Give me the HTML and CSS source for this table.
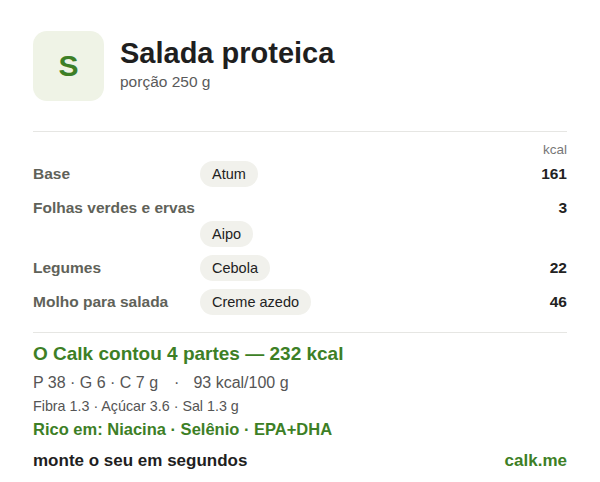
FILE: index.html
```html
<!DOCTYPE html>
<html lang="pt">
<head>
    <meta charset="UTF-8">
    <meta name="viewport" content="width=device-width, initial-scale=1.0">
    <title>Salada proteica</title>
    <link rel="stylesheet" href="styles.css">
</head>
<body>
    <div class="card">
        <!-- Header -->
        <div class="header">
            <div class="avatar">S</div>
            <div class="title-block">
                <h1>Salada proteica</h1>
                <div class="portion">porção 250 g</div>
            </div>
        </div>

        <!-- Parts -->
        <div class="parts">
            <div class="unit">kcal</div>
            <div class="row">
                <div class="label">Base</div>
                <div class="pills"><span class="pill">Atum</span></div>
                <div class="num">161</div>
            </div>
            <div class="row split">
                <div class="label">Folhas verdes e ervas</div>
                <div class="num">3</div>
                <div class="pills"><span class="pill">Aipo</span></div>
            </div>
            <div class="row">
                <div class="label">Legumes</div>
                <div class="pills"><span class="pill">Cebola</span></div>
                <div class="num">22</div>
            </div>
            <div class="row">
                <div class="label">Molho para salada</div>
                <div class="pills"><span class="pill">Creme azedo</span></div>
                <div class="num">46</div>
            </div>
        </div>

        <!-- Summary -->
        <div class="summary">
            <div class="total">O Calk contou 4 partes — 232 kcal</div>
            <div class="macros">P 38 · G 6 · C 7 g<span class="sep">·</span>93 kcal/100 g</div>
            <div class="extra">Fibra 1.3 · Açúcar 3.6 · Sal 1.3 g</div>
            <div class="rich">Rico em: Niacina · Selênio · EPA+DHA</div>
        </div>

        <div class="footer">
            <span class="cta">monte o seu em segundos</span>
            <span class="brand">calk.me</span>
        </div>
    </div>
</body>
</html>
```

FILE: styles.css
```css
body {
    font-family: 'Liberation Sans', Arial, sans-serif;
    margin: 0;
    padding: 0;
    background: #ffffff;
    color: #222;
}

.card {
    padding: 31px 33px 0 33px;
}

/* Header */
.header {
    display: flex;
    align-items: center;
    gap: 16px;
    padding-bottom: 30px;
    border-bottom: 1px solid #e6e6e3;
}

.avatar {
    width: 71px;
    height: 70px;
    border-radius: 14px;
    background: #eff3e6;
    color: #3d7f26;
    font-size: 30px;
    font-weight: bold;
    display: flex;
    align-items: center;
    justify-content: center;
}

.title-block {
    margin-top: -6px;
}

h1 {
    margin: 0;
    font-size: 29px;
    line-height: 34px;
    color: #1f1f1f;
}

.portion {
    font-size: 15.5px;
    color: #5a5a5a;
    margin-top: 3px;
}

/* Parts table */
.parts {
    display: flex;
    flex-direction: column;
    gap: 8px;
    padding-top: 10px;
    padding-bottom: 17px;
    border-bottom: 1px solid #e6e6e3;
}

.unit {
    text-align: right;
    font-size: 13.5px;
    color: #777;
    margin-bottom: -4px;
}

.row {
    display: grid;
    grid-template-columns: 167px 1fr auto;
    grid-auto-rows: 26px;
    align-items: center;
}

.row.split .label { grid-row: 1; grid-column: 1; }
.row.split .num { grid-row: 1; grid-column: 3; }
.row.split .pills { grid-row: 2; grid-column: 2; }

.label {
    font-size: 15.5px;
    font-weight: bold;
    color: #5f6259;
    white-space: nowrap;
}

.pills {
    display: flex;
    gap: 6px;
}

.pill {
    background: #f1f1ec;
    border-radius: 13px;
    height: 26px;
    line-height: 26px;
    padding: 0 12px;
    font-size: 14.5px;
    color: #222;
}

.num {
    font-size: 15.5px;
    font-weight: bold;
    color: #222;
    text-align: right;
}

/* Summary */
.summary {
    padding-top: 10px;
}

.total {
    font-size: 19px;
    font-weight: bold;
    color: #3d7f26;
    line-height: 22px;
}

.macros {
    font-size: 16px;
    color: #555;
    margin-top: 8px;
    line-height: 19px;
}

.macros .sep {
    margin: 0 14px 0 16px;
}

.extra {
    font-size: 14.3px;
    color: #555;
    margin-top: 5px;
    line-height: 18px;
}

.rich {
    font-size: 16.5px;
    font-weight: bold;
    color: #3d7f26;
    margin-top: 4px;
    line-height: 20px;
}

.footer {
    display: flex;
    justify-content: space-between;
    align-items: center;
    margin-top: 12px;
    font-size: 17px;
    font-weight: bold;
}

.cta {
    color: #1f1f1f;
}

.brand {
    color: #3d7f26;
}
```
